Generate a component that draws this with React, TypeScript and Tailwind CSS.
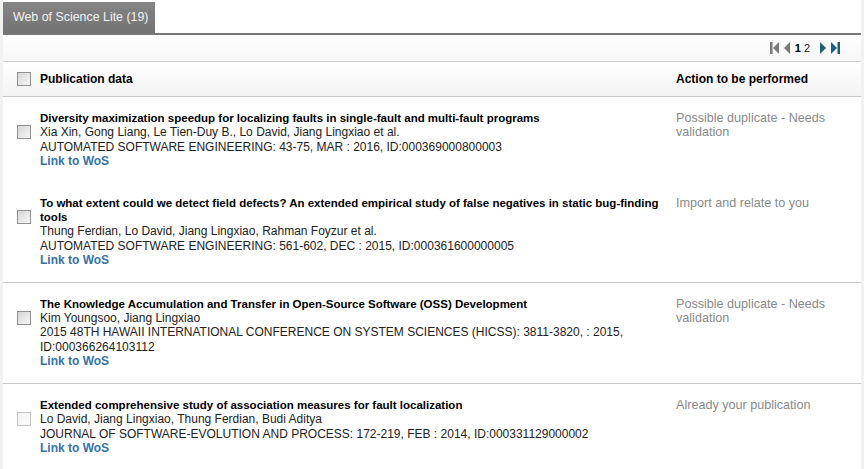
import type { ReactNode } from 'react';

type Pub = {
  id: string;
  title: string;
  authors: string;
  source: string[];
  action: string;
  disabled?: boolean;
};

const pubs: Pub[] = [
  {
    id: 'p1',
    title: 'Diversity maximization speedup for localizing faults in single-fault and multi-fault programs',
    authors: 'Xia Xin, Gong Liang, Le Tien-Duy B., Lo David, Jiang Lingxiao et al.',
    source: ['AUTOMATED SOFTWARE ENGINEERING: 43-75, MAR : 2016, ID:000369000800003'],
    action: 'Possible duplicate - Needs validation',
  },
  {
    id: 'p2',
    title: 'To what extent could we detect field defects? An extended empirical study of false negatives in static bug-finding tools',
    authors: 'Thung Ferdian, Lo David, Jiang Lingxiao, Rahman Foyzur et al.',
    source: ['AUTOMATED SOFTWARE ENGINEERING: 561-602, DEC : 2015, ID:000361600000005'],
    action: 'Import and relate to you',
  },
  {
    id: 'p3',
    title: 'The Knowledge Accumulation and Transfer in Open-Source Software (OSS) Development',
    authors: 'Kim Youngsoo, Jiang Lingxiao',
    source: [
      '2015 48TH HAWAII INTERNATIONAL CONFERENCE ON SYSTEM SCIENCES (HICSS): 3811-3820, : 2015,',
      'ID:000366264103112',
    ],
    action: 'Possible duplicate - Needs validation',
  },
  {
    id: 'p4',
    title: 'Extended comprehensive study of association measures for fault localization',
    authors: 'Lo David, Jiang Lingxiao, Thung Ferdian, Budi Aditya',
    source: ['JOURNAL OF SOFTWARE-EVOLUTION AND PROCESS: 172-219, FEB : 2014, ID:000331129000002'],
    action: 'Already your publication',
    disabled: true,
  },
];

function Box({ disabled }: { disabled?: boolean }) {
  return (
    <span
      className={
        disabled
          ? 'block w-[14px] h-[14px] border border-[#c4c4c4] bg-gradient-to-br from-[#f2f2f2] to-[#fdfdfd]'
          : 'block w-[14px] h-[14px] border border-[#8f8f8f] bg-gradient-to-br from-[#d6d6d6] to-[#f7f7f7]'
      }
    />
  );
}

function Tri({ dir, color, bar, className }: { dir: 'l' | 'r'; color: string; bar?: boolean; className?: string }) {
  return (
    <svg className={className} width={bar ? 9 : 7} height="12" viewBox={bar ? '0 0 9 12' : '0 0 7 12'}>
      {dir === 'l' ? (
        <>
          {bar && <rect x="0" y="0" width="2.5" height="12" fill={color} />}
          <polygon points={bar ? '9,0 9,12 3,6' : '7,0 7,12 1,6'} fill={color} />
        </>
      ) : (
        <>
          <polygon points="0,0 0,12 6,6" fill={color} />
          {bar && <rect x="6.5" y="0" width="2.5" height="12" fill={color} />}
        </>
      )}
    </svg>
  );
}

function Row({ pub, first, border, children }: { pub: Pub; first?: boolean; border?: boolean; children?: ReactNode }) {
  return (
    <div
      className={
        'flex pl-[14px] pt-[14px] ' +
        (first ? 'pb-[13px] ' : 'pb-[14px] ') +
        (border ? 'border-b border-[#c8c8c8]' : '')
      }
    >
      <div className="w-[23px] shrink-0 pt-[14px]">
        <Box disabled={pub.disabled} />
      </div>
      <div className="w-[636px] shrink-0 pr-[6px] text-[12px] leading-[14.4px] text-[#222]">
        <div className="font-bold text-[11.5px] text-black">{pub.title}</div>
        <div>{pub.authors}</div>
        {pub.source.map((s) => (
          <div key={s}>{s}</div>
        ))}
        <div className="font-bold text-[#3672a8]">Link to WoS</div>
        {children}
      </div>
      <div className="w-[160px] shrink-0 text-[12.6px] leading-[14.4px] text-[#8a8a8a]">{pub.action}</div>
    </div>
  );
}

export default function App() {
  return (
    <div className="w-[864px] h-[469px] bg-[#f1f1f1] pl-[3px] pr-[3px] overflow-hidden font-['Liberation_Sans',Arial,sans-serif]">
      <div className="h-full bg-white">
        <div className="flex h-[33px] items-end bg-white">
          <div className="h-[31px] w-[152px] bg-gradient-to-b from-[#858585] to-[#737373] text-[#f2f2f2] text-[12.4px] pl-[10px] flex items-center">
            Web of Science Lite (19)
          </div>
        </div>
        <div className="h-[2px] bg-[#777]" />
        <div className="h-[27px] flex items-center justify-end pr-[21px] bg-gradient-to-b from-white to-[#f6f6f6] border-b border-[#cfcfcf]">
          <Tri dir="l" color="#7a7a7a" bar />
          <Tri dir="l" color="#7a7a7a" className="ml-[4px]" />
          <span className="ml-[5px] text-[11px] font-bold text-black">1</span>
          <span className="ml-[3px] text-[11px] text-[#222]">2</span>
          <Tri dir="r" color="#1b5f82" className="ml-[10px]" />
          <Tri dir="r" color="#1b5f82" bar className="ml-[4px]" />
        </div>
        <div className="h-[35px] flex items-center pl-[14px] bg-gradient-to-b from-white to-[#f3f3f3] border-b border-[#c8c8c8] text-[12px] font-bold text-black">
          <div className="w-[23px] shrink-0">
            <Box />
          </div>
          <div className="w-[636px] shrink-0">Publication data</div>
          <div>Action to be performed</div>
        </div>
        <Row pub={pubs[0]} first />
        <Row pub={pubs[1]} border />
        <Row pub={pubs[2]} border />
        <Row pub={pubs[3]} />
      </div>
    </div>
  );
}
